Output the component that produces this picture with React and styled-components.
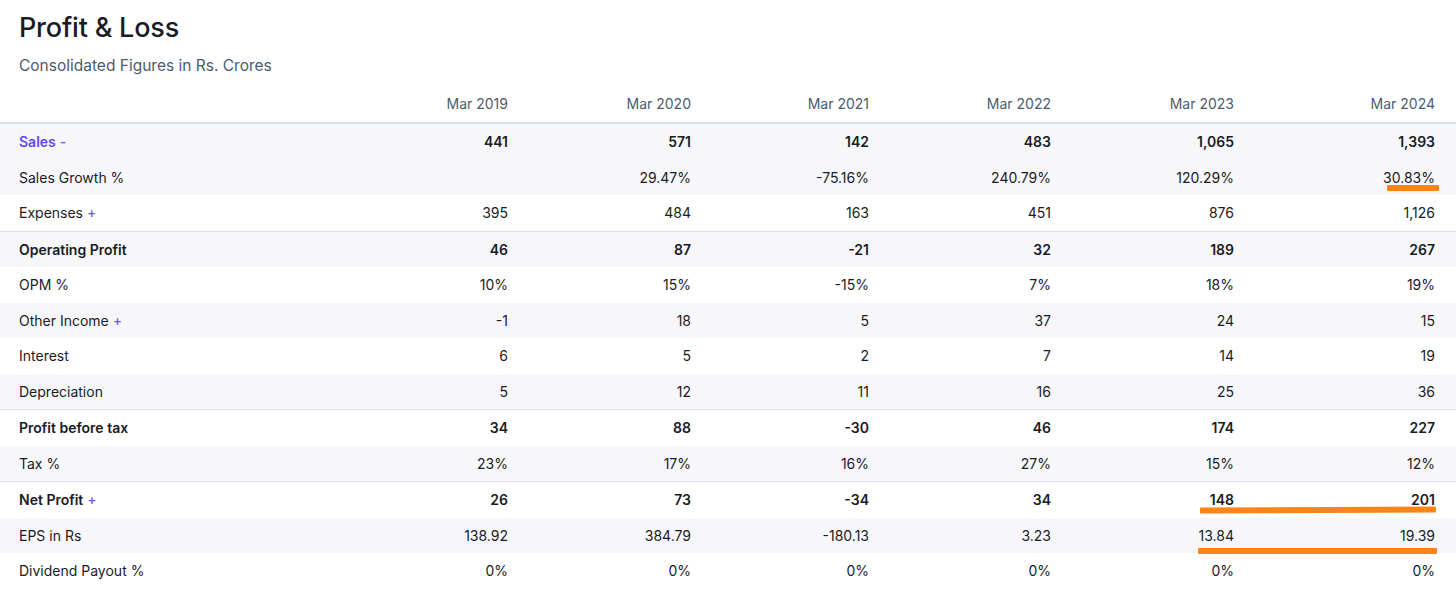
import React from "react";
import styled, { createGlobalStyle } from "styled-components";

const GlobalStyle = createGlobalStyle`
  html, body {
    margin: 0;
    padding: 0;
    background: #ffffff;
  }
  body {
    font-family: Inter, "Noto Sans", sans-serif;
    color: #1a1b24;
  }
`;

const Page = styled.div`
  position: relative;
  width: 1456px;
  height: 594px;
  overflow: hidden;
`;

const Head = styled.div`
  padding: 9px 0 0 19px;
`;

const Title = styled.h2`
  margin: 0;
  font-size: 27px;
  font-weight: 500;
  line-height: 38px;
  letter-spacing: -0.2px;
  color: #1a1b26;
`;

const Subtitle = styled.p`
  margin: 0;
  padding-top: 9px;
  font-size: 15.5px;
  line-height: 20px;
  color: #4c5b6d;
`;

const Table = styled.div`
  margin-top: 8px;
`;

const Row = styled.div`
  display: grid;
  grid-template-columns: 330px 178px 183px 178px 182px 183px 201px;
  align-items: center;
  height: ${(p) => (p.$header ? "38px" : "35.5px")};
  padding-right: 21px;
  background: ${(p) => (p.$shade ? "#f7f7fb" : "#ffffff")};
  border-top: ${(p) => (p.$line ? "1px solid #d6e0ef" : "none")};
  border-bottom: ${(p) => (p.$header ? "2px solid #d6e0ef" : "none")};
  font-size: 14px;
  font-weight: ${(p) => (p.$strong ? 600 : 400)};
`;

const Label = styled.div`
  padding-left: 19px;
  color: ${(p) => (p.$link ? "#5a4cf0" : "#1a1b24")};
  white-space: nowrap;
`;

const Toggle = styled.span`
  color: #6a5cff;
  font-weight: 500;
  margin-left: 4px;
`;

const Cell = styled.div`
  text-align: right;
  color: ${(p) => (p.$muted ? "#4c5b6d" : "#1a1b24")};
  white-space: nowrap;
`;

const Mark = styled.div`
  position: absolute;
  background: #ff8418;
  border-radius: 1px;
`;

const years = ["Mar 2019", "Mar 2020", "Mar 2021", "Mar 2022", "Mar 2023", "Mar 2024"];

const rows = [
  { label: "Sales", toggle: "-", link: true, strong: true, shade: true, values: ["441", "571", "142", "483", "1,065", "1,393"] },
  { label: "Sales Growth %", shade: true, values: ["", "29.47%", "-75.16%", "240.79%", "120.29%", "30.83%"] },
  { label: "Expenses", toggle: "+", values: ["395", "484", "163", "451", "876", "1,126"] },
  { label: "Operating Profit", strong: true, line: true, shade: true, values: ["46", "87", "-21", "32", "189", "267"] },
  { label: "OPM %", values: ["10%", "15%", "-15%", "7%", "18%", "19%"] },
  { label: "Other Income", toggle: "+", shade: true, values: ["-1", "18", "5", "37", "24", "15"] },
  { label: "Interest", values: ["6", "5", "2", "7", "14", "19"] },
  { label: "Depreciation", shade: true, values: ["5", "12", "11", "16", "25", "36"] },
  { label: "Profit before tax", strong: true, line: true, values: ["34", "88", "-30", "46", "174", "227"] },
  { label: "Tax %", shade: true, values: ["23%", "17%", "16%", "27%", "15%", "12%"] },
  { label: "Net Profit", toggle: "+", strong: true, line: true, values: ["26", "73", "-34", "34", "148", "201"] },
  { label: "EPS in Rs", shade: true, values: ["138.92", "384.79", "-180.13", "3.23", "13.84", "19.39"] },
  { label: "Dividend Payout %", values: ["0%", "0%", "0%", "0%", "0%", "0%"] },
];

export default function App() {
  return (
    <Page>
      <GlobalStyle />
      <Head>
        <Title>Profit &amp; Loss</Title>
        <Subtitle>Consolidated Figures in Rs. Crores</Subtitle>
      </Head>
      <Table>
        <Row $header>
          <Label />
          {years.map((y) => (
            <Cell key={y} $muted>
              {y}
            </Cell>
          ))}
        </Row>
        {rows.map((r) => (
          <Row key={r.label} $shade={r.shade} $line={r.line} $strong={r.strong}>
            <Label $link={r.link}>
              {r.label}
              {r.toggle && <Toggle>{r.toggle}</Toggle>}
            </Label>
            {r.values.map((v, i) => (
              <Cell key={i}>{v}</Cell>
            ))}
          </Row>
        ))}
      </Table>
      {/* hand-drawn highlight strokes */}
      <Mark style={{ left: 1387, top: 185, width: 52, height: 6 }} />
      <Mark style={{ left: 1200, top: 507, width: 236, height: 6, transform: "rotate(-0.25deg)" }} />
      <Mark style={{ left: 1198, top: 548, width: 239, height: 6 }} />
    </Page>
  );
}
